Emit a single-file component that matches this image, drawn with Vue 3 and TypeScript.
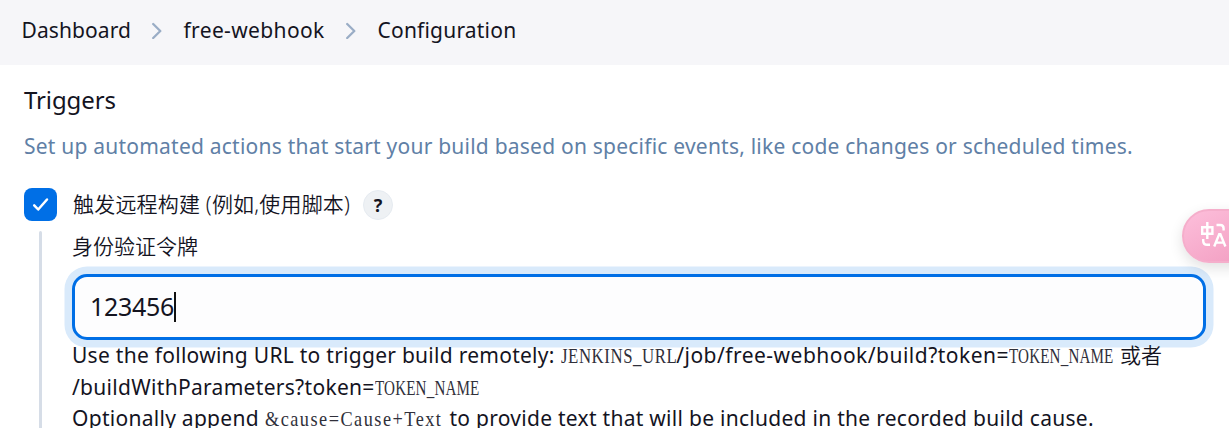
<script setup lang="ts">
import { ref } from 'vue'

const crumbs = ['Dashboard', 'free-webhook', 'Configuration']
const token = ref('123456')
const cell = 10.5
const codeWidth = (text: string) => ({ width: `${text.length * cell}px` })
</script>

<template>
  <div class="page">
    <nav class="crumbs">
      <template v-for="(crumb, i) in crumbs" :key="crumb">
        <svg v-if="i" class="chevron" viewBox="0 0 12 18"><path d="M2.2 3 9.3 10 2.2 17" /></svg>
        <span :class="['crumb', `crumb-${i}`]">{{ crumb }}</span>
      </template>
    </nav>
    <main>
      <h2>Triggers</h2>
      <p class="description">Set up automated actions that start your build based on specific events, like code changes or scheduled times.</p>
      <div class="option">
        <span class="checkbox">
          <svg viewBox="0 0 33 33"><path d="m10.2 17.3 4 4.2 8.8-10" /></svg>
        </span>
        <span class="option-label">触发远程构建 (例如,使用脚本)</span>
        <span class="help">?</span>
      </div>
      <div class="nested">
        <div class="rail"></div>
        <div class="fields">
          <div class="field-label">身份验证令牌</div>
          <div class="input"><span class="value">{{ token }}</span><span class="caret"></span></div>
          <div class="hint">
            <div class="line"><span class="l1a">Use the following URL to trigger build remotely:</span><span class="code url gap" :style="codeWidth('JENKINS_URL')"><span>JENKINS_URL</span></span><span class="l1b">/job/free-webhook/build?token=</span><span class="code name" :style="codeWidth('TOKEN_NAME')"><span>TOKEN_NAME</span></span><span class="or">或者</span></div>
            <div class="line"><span class="l2">/buildWithParameters?token=</span><span class="code name" :style="codeWidth('TOKEN_NAME')"><span>TOKEN_NAME</span></span></div>
            <div class="line"><span class="l3a">Optionally append</span><span class="code cause gap" :style="codeWidth('&cause=Cause+Text')"><span>&amp;cause=Cause+Text</span></span><span class="l3b gap">to provide text that will be included in the recorded build cause.</span></div>
          </div>
        </div>
      </div>
    </main>
    <button class="translate" aria-label="Translate">
      <svg viewBox="0 0 28 28">
        <path d="M3.2 5.2h10.2v6.6H3.2zM8.3 0v17M17.5 3h3.7q3.4 0 3.4 3.4V8.5M4.2 17v1.8q0 4 4 4H11" />
        <path d="m15.2 24.5 5-12.2h1.2l5 12.2M17 20.6h7.5" />
      </svg>
    </button>
  </div>
</template>

<style>
body { background: #fff; overflow: hidden; }
</style>

<style scoped>
* { box-sizing: border-box; }
.page {
  position: relative;
  height: 428px;
  overflow: hidden;
  color: #14141f;
  background: #fff;
  font-family: "Noto Sans", "Noto Sans CJK SC", sans-serif;
  font-size: 21px;
}
.crumbs {
  display: flex;
  align-items: center;
  height: 65px;
  padding: 0 0 5px 21.5px;
  background: #f6f6f9;
}
.crumb { white-space: nowrap; }
.crumb-0 { width: 129px; letter-spacing: .1px; }
.crumb-1 { width: 161px; margin-left: 21px; letter-spacing: .36px; }
.crumb-2 { margin-left: 21px; letter-spacing: .2px; }
.chevron { width: 12px; height: 18px; fill: none; stroke: #9aadc6; stroke-width: 2.3; stroke-linecap: round; stroke-linejoin: round; }
main { padding: 20px 0 0 24px; }
h2 { margin: 0; font-size: 24px; line-height: 30px; font-weight: 400; letter-spacing: -.1px; }
.description { margin: 16px 0 0; line-height: 30px; color: #6080a6; white-space: nowrap; letter-spacing: .222px; }
.option { display: flex; align-items: center; height: 33px; margin-top: 27px; }
.checkbox { width: 33px; height: 33px; border-radius: 8px; background: #006fe6; }
.checkbox svg { display: block; width: 33px; height: 33px; fill: none; stroke: #fff; stroke-width: 2.5; stroke-linecap: round; stroke-linejoin: round; }
.option-label { width: 290px; margin-left: 16px; padding-bottom: 3px; white-space: nowrap; font-weight: 350; letter-spacing: .2px; }
.help {
  width: 30px;
  height: 30px;
  border: 1px solid #e6ebf1;
  border-radius: 50%;
  background: #eef1f4;
  text-align: center;
  font-size: 18px;
  line-height: 28px;
  font-weight: 700;
}
.nested { display: flex; margin-top: 10px; height: 240px; }
.rail { width: 3px; margin-left: 15px; border-radius: 2px; background: #d6dde7; }
.fields { margin-left: 30px; width: 1134px; }
.field-label { height: 43px; line-height: 31px; font-weight: 350; }
.input {
  display: flex;
  align-items: center;
  height: 66px;
  padding-left: 15px;
  border: 3px solid #006fe6;
  border-radius: 15px;
  background: #fdfdfe;
  box-shadow: 0 0 0 7.5px #d9eafb;
}
.value { font-size: 25px; width: 84px; padding-bottom: 2px; letter-spacing: -.3px; }
.caret { width: 2px; height: 30px; background: #111; }
.hint { position: relative; }
.line { display: flex; align-items: baseline; height: 31.5px; line-height: 31.5px; white-space: nowrap; }
.l1a { letter-spacing: .27px; }
.l1b { letter-spacing: .48px; }
.l2 { letter-spacing: .3px; }
.l3a, .l3b { letter-spacing: .28px; }
.code { display: inline-block; font-family: "Liberation Serif", serif; color: #30303a; }
.code > span { display: inline-block; transform-origin: left; }
.url > span { transform: scaleX(.8); letter-spacing: .7px; }
.name > span { transform: scaleX(.72); letter-spacing: .2px; }
.cause > span { transform: scaleX(.87); letter-spacing: 1.7px; }
.gap { margin-left: 6px; }
.or { margin-left: 6px; font-weight: 350; }
.translate {
  position: absolute;
  top: 209px;
  right: -12px;
  width: 59px;
  height: 54px;
  padding: 0;
  border: 2px solid #f5aecb;
  border-radius: 27px 0 0 27px;
  background: linear-gradient(150deg, #fdbfdb, #f3a0c3);
  box-shadow: 0 5px 14px rgba(0, 0, 0, .12);
}
.translate svg { display: block; width: 28px; height: 28px; margin-left: 15px; fill: none; stroke: #fff; stroke-width: 2.4; }
</style>
